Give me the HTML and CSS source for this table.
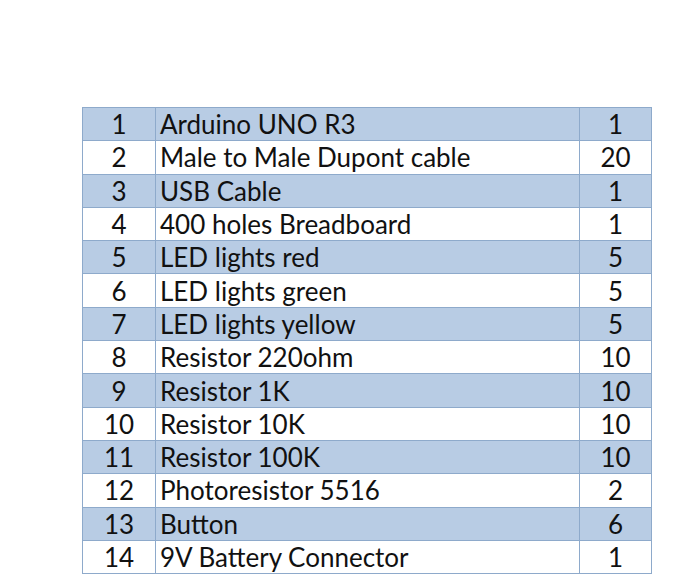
FILE: index.html
```html
<!DOCTYPE html>
<html>
<head>
<meta charset="utf-8">
<link rel="stylesheet" href="styles.css">
</head>
<body>
<div class="page">
<table class="parts">
<tr class="blue"><td class="num">1</td><td class="name">Arduino UNO R3</td><td class="qty">1</td></tr>
<tr><td class="num">2</td><td class="name">Male to Male Dupont cable</td><td class="qty">20</td></tr>
<tr class="blue"><td class="num">3</td><td class="name">USB Cable</td><td class="qty">1</td></tr>
<tr><td class="num">4</td><td class="name">400 holes Breadboard</td><td class="qty">1</td></tr>
<tr class="blue"><td class="num">5</td><td class="name">LED lights red</td><td class="qty">5</td></tr>
<tr><td class="num">6</td><td class="name">LED lights green</td><td class="qty">5</td></tr>
<tr class="blue"><td class="num">7</td><td class="name">LED lights yellow</td><td class="qty">5</td></tr>
<tr><td class="num">8</td><td class="name">Resistor 220ohm</td><td class="qty">10</td></tr>
<tr class="blue"><td class="num">9</td><td class="name">Resistor 1K</td><td class="qty">10</td></tr>
<tr><td class="num">10</td><td class="name">Resistor 10K</td><td class="qty">10</td></tr>
<tr class="blue"><td class="num">11</td><td class="name">Resistor 100K</td><td class="qty">10</td></tr>
<tr><td class="num">12</td><td class="name">Photoresistor 5516</td><td class="qty">2</td></tr>
<tr class="blue"><td class="num">13</td><td class="name">Button</td><td class="qty">6</td></tr>
<tr><td class="num">14</td><td class="name">9V Battery Connector</td><td class="qty">1</td></tr>
</table>
</div>
</body>
</html>
```
FILE: styles.css
```css
html, body {
  margin: 0;
  padding: 0;
  background: #ffffff;
}
.page {
  padding: 107px 0 0 82px;
}
.parts {
  border-collapse: collapse;
  font-family: Lato, "Open Sans", sans-serif;
  font-size: 26px;
  color: #111111;
}
.parts td {
  border: 1px solid #8eaacb;
  height: 32.3px;
  padding: 0;
  line-height: 1;
}
.parts tr.blue td {
  background: #b8cce4;
}
.num {
  width: 72px;
  text-align: center;
}
.name {
  width: 419px;
  padding-left: 4px !important;
}
.qty {
  width: 71px;
  text-align: center;
}
```
